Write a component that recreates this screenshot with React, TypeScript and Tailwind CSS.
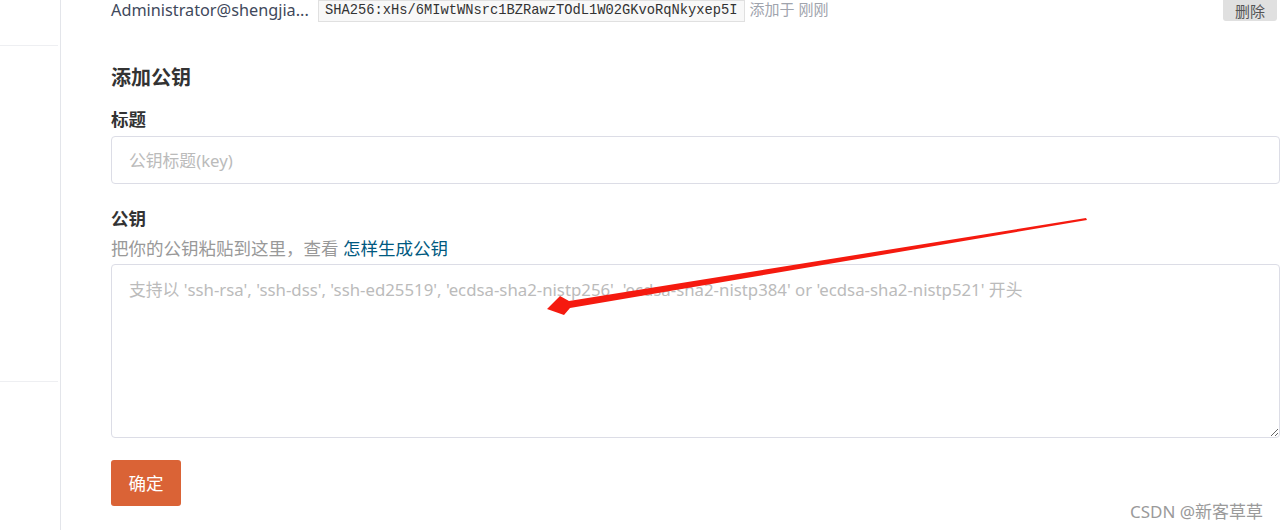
import React from 'react';

const cjk = { fontFamily: '"Noto Sans", "Noto Sans CJK SC", sans-serif' };

export default function App() {
  return (
    <div className="relative flex h-[530px] w-[1281px] overflow-hidden bg-white text-[#40485b]" style={cjk}>
      {/* Sidebar */}
      <aside className="w-[61px] shrink-0 border-r border-[#e3e5ea]">
        <div className="mr-[2px] h-[46px] border-b border-[#eeeff2]" />
        <div className="mr-[2px] h-[336px] border-b border-[#eeeff2]" />
      </aside>

      {/* Main */}
      <main className="flex-1 pl-[50px] pr-[1px]">
        {/* Existing key row */}
        <div className="flex h-[22px] items-start">
          <span className="mt-[-1px] w-[207px] text-[16.25px] leading-[22px] text-[#40485b]">Administrator@shengjia...</span>
          <code
            className="h-[22px] border border-[#e0e0e0] bg-[#f8f8f8] px-[6px] text-[13.75px] leading-[20px] text-[#333]"
            style={{ fontFamily: '"Liberation Mono", monospace' }}
          >
            SHA256:xHs/6MIwtWNsrc1BZRawzTOdL1W02GKvoRqNkyxep5I
          </code>
          <span className="ml-[5px] text-[15px] leading-[18px] text-[#a0a4ad]">添加于 刚刚</span>
          <button className="ml-auto mr-[3px] h-[21px] w-[54px] rounded-b-[3px] bg-[#e0e0e0] text-[15px] leading-[18px] text-[#555]">删除</button>
        </div>

        {/* Form */}
        <h2 className="mt-[42px] text-[20px] font-bold leading-[28px] text-[#333]">添加公钥</h2>

        <label className="mt-[15px] block text-[17.5px] font-bold leading-[24px] text-[#333]">标题</label>
        <input
          className="mt-[5px] block h-[48px] w-full rounded-[4px] border border-[#dcdde6] px-[17px] text-[16.8px] outline-none placeholder:text-[#bbb]"
          placeholder="公钥标题(key)"
        />

        <label className="mt-[22px] block text-[17.5px] font-bold leading-[24px] text-[#333]">公钥</label>
        <p className="mt-[6px] text-[17.5px] leading-[24px] text-[#999]">
          把你的公钥粘贴到这里，查看 <a className="text-[#005980]">怎样生成公钥</a>
        </p>
        <textarea
          className="mt-[4px] block h-[174px] w-full rounded-[4px] border border-[#dcdde6] px-[17px] py-[13px] text-[16.8px] leading-[24px] outline-none placeholder:text-[#bbb]"
          placeholder="支持以 'ssh-rsa', 'ssh-dss', 'ssh-ed25519', 'ecdsa-sha2-nistp256', 'ecdsa-sha2-nistp384' or 'ecdsa-sha2-nistp521' 开头"
        />

        <button className="mt-[22px] h-[46px] w-[70px] rounded-[3px] bg-[#da6336] text-[17.5px] text-white">确定</button>
      </main>

      {/* Annotation arrow */}
      <svg className="pointer-events-none absolute left-0 top-0" width="1281" height="530">
        <polygon
          points="1086,218 569,301 560,296 547,309 564,315 570,308 1087,220"
          fill="#f51a0f"
        />
      </svg>

      {/* Watermark */}
      <span className="absolute left-[1130px] top-[500px] text-[17px] leading-[24px] text-[#9a9a9a]">CSDN @新客草草</span>
    </div>
  );
}
